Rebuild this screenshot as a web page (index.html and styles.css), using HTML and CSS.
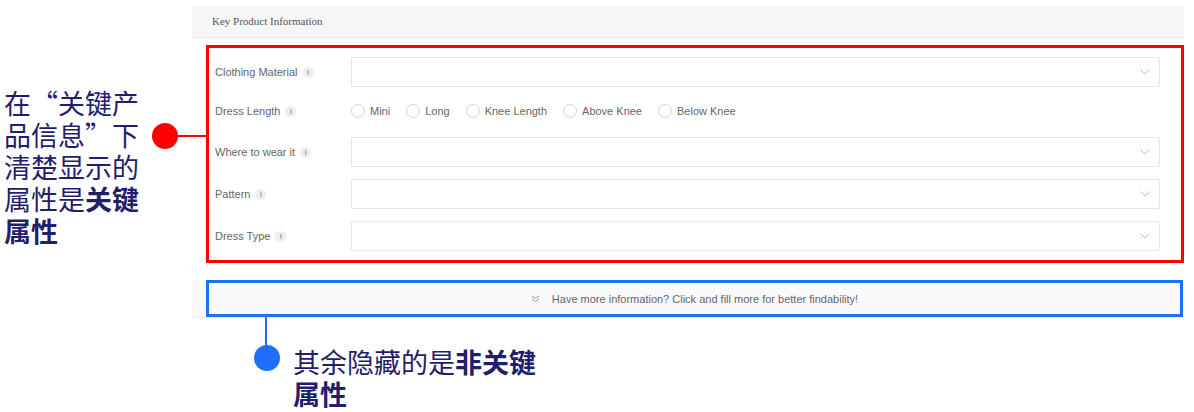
FILE: index.html
```html
<!DOCTYPE html>
<html lang="zh-CN">
<head>
  <meta charset="UTF-8">
  <meta name="viewport" content="width=device-width, initial-scale=1.0">
  <title>Key Product Information</title>
  <link rel="stylesheet" href="styles.css">
</head>
<body>
<div class="page">
  <section class="panel">
    <div class="panel-head">Key Product Information</div>

    <div class="key-box">
      <div class="field">
        <div class="field-label">Clothing Material <span class="tip">i</span></div>
        <div class="select">
          <svg class="arrow" width="10" height="6" viewBox="0 0 10 6"><polyline points="0.5,0.5 5,5 9.5,0.5" fill="none" stroke="#bbb" stroke-width="1"/></svg>
        </div>
      </div>
      <div class="field field-radio">
        <div class="field-label">Dress Length <span class="tip">i</span></div>
        <div class="radios">
          <span class="radio"><i class="dot"></i>Mini</span>
          <span class="radio"><i class="dot"></i>Long</span>
          <span class="radio"><i class="dot"></i>Knee Length</span>
          <span class="radio"><i class="dot"></i>Above Knee</span>
          <span class="radio"><i class="dot"></i>Below Knee</span>
        </div>
      </div>
      <div class="field">
        <div class="field-label">Where to wear it <span class="tip">i</span></div>
        <div class="select">
          <svg class="arrow" width="10" height="6" viewBox="0 0 10 6"><polyline points="0.5,0.5 5,5 9.5,0.5" fill="none" stroke="#bbb" stroke-width="1"/></svg>
        </div>
      </div>
      <div class="field">
        <div class="field-label">Pattern <span class="tip">i</span></div>
        <div class="select">
          <svg class="arrow" width="10" height="6" viewBox="0 0 10 6"><polyline points="0.5,0.5 5,5 9.5,0.5" fill="none" stroke="#bbb" stroke-width="1"/></svg>
        </div>
      </div>
      <div class="field">
        <div class="field-label">Dress Type <span class="tip">i</span></div>
        <div class="select">
          <svg class="arrow" width="10" height="6" viewBox="0 0 10 6"><polyline points="0.5,0.5 5,5 9.5,0.5" fill="none" stroke="#bbb" stroke-width="1"/></svg>
        </div>
      </div>
    </div>

    <div class="more-row">
      <div class="more-btn">
        <svg width="9" height="8" viewBox="0 0 9 8"><polyline points="1,1 4.5,3.5 8,1" fill="none" stroke="#999" stroke-width="1"/><polyline points="1,4 4.5,6.5 8,4" fill="none" stroke="#999" stroke-width="1"/></svg>
        <span>Have more information? Click and fill more for better findability!</span>
      </div>
    </div>
  </section>

  <!-- callouts -->
  <div class="note note-key">在“关键产<br>品信息”下<br>清楚显示的<br>属性是<b>关键</b><br><b>属性</b></div>
  <span class="pin pin-red"></span>
  <span class="lead lead-red"></span>

  <span class="lead lead-blue"></span>
  <span class="pin pin-blue"></span>
  <div class="note note-more">其余隐藏的是<b>非关键</b><br><b>属性</b></div>
</div>
</body>
</html>
```

FILE: styles.css
```css
body {
  margin: 0;
  background: #fff;
  font-family: "Liberation Sans", Arial, sans-serif;
}
.page {
  position: relative;
  width: 1194px;
  height: 412px;
  overflow: hidden;
}
.panel {
  margin-left: 192px;
  width: 992px;
  padding-top: 6px;
}
.panel-head {
  height: 31px;
  line-height: 31px;
  padding-left: 20px;
  background: #f5f6f8;
  border-bottom: 1px solid #e9eaec;
  font-family: "Liberation Serif", "Times New Roman", serif;
  font-size: 11px;
  color: #555;
}
.key-box {
  margin: 7px 0 0 14px;
  width: 978px;
  box-sizing: border-box;
  border: 3px solid #ff0000;
  padding: 9px 21px 9px 6px;
  display: flex;
  flex-direction: column;
  gap: 12px;
}
.field {
  display: flex;
  align-items: center;
}
.field-label {
  width: 136px;
  flex: none;
  display: flex;
  align-items: center;
  gap: 5px;
  font-size: 11px;
  color: #666;
}
.tip {
  width: 11px;
  height: 11px;
  border-radius: 50%;
  background: #eeeeee;
  color: #999;
  font-size: 8px;
  font-weight: bold;
  line-height: 11px;
  text-align: center;
}
.select {
  flex: 1;
  height: 30px;
  box-sizing: border-box;
  border: 1px solid #e6e6e6;
  border-radius: 2px;
  display: flex;
  align-items: center;
  justify-content: flex-end;
  padding-right: 9px;
}
.field-radio {
  height: 24px;
  padding-bottom: 2px;
}
.radios {
  display: flex;
  align-items: center;
  gap: 16px;
}
.radio {
  display: flex;
  align-items: center;
  gap: 5px;
  font-size: 11px;
  color: #666;
}
.dot {
  width: 12px;
  height: 12px;
  border: 1px solid #d4d4d4;
  border-radius: 50%;
  background: #fff;
}
.more-row {
  margin-top: 17px;
  padding-left: 14px;
  background: #fafafa;
  border-bottom: 1px solid #eeeeee;
}
.more-btn {
  width: 977px;
  height: 37px;
  box-sizing: border-box;
  border: 3px solid #1f6fff;
  background: #fafafa;
  display: flex;
  align-items: center;
  justify-content: center;
  gap: 12px;
  font-size: 11px;
  color: #666;
}

/* callouts */
.note {
  position: absolute;
  font-family: "Noto Sans CJK SC", sans-serif;
  font-size: 27px;
  line-height: 32px;
  color: #231e6c;
}
.note b {
  font-weight: 700;
}
.note-key {
  left: 4px;
  top: 87px;
}
.note-more {
  left: 293px;
  top: 346px;
}
.pin {
  position: absolute;
  width: 26px;
  height: 26px;
  border-radius: 50%;
}
.pin-red {
  left: 152px;
  top: 123px;
  background: #ff0000;
}
.pin-blue {
  left: 254px;
  top: 345px;
  background: #1f6fff;
}
.lead {
  position: absolute;
}
.lead-red {
  left: 176px;
  top: 135px;
  width: 31px;
  height: 2px;
  background: #ff0000;
}
.lead-blue {
  left: 265px;
  top: 316px;
  width: 2px;
  height: 32px;
  background: #1f6fff;
}
```
